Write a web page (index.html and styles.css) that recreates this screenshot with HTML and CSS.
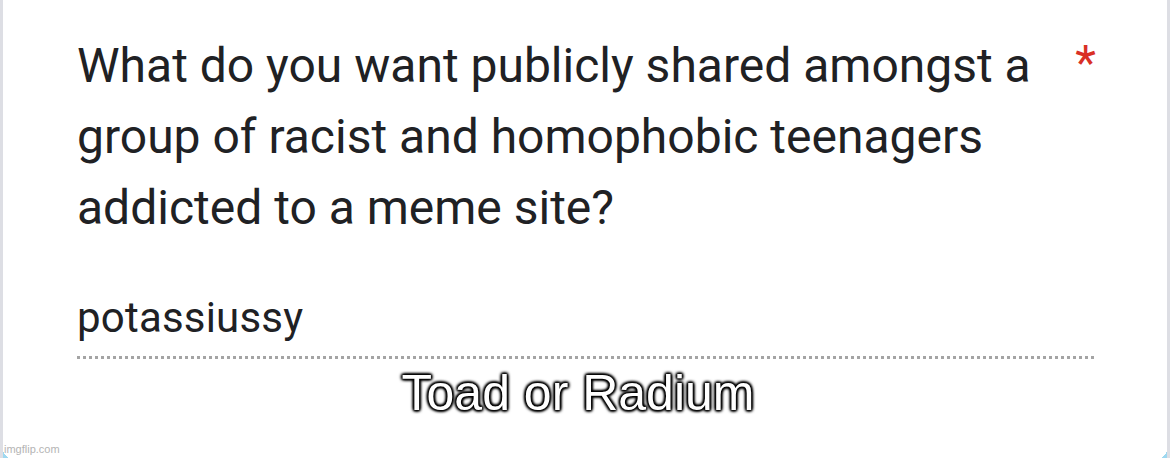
FILE: index.html
```html
<!DOCTYPE html>
<html>
<head>
<meta charset="utf-8">
<link rel="stylesheet" href="styles.css">
</head>
<body>
<div class="frame">
  <div class="card">
    <div class="question">
      <div class="question-text">What do you want publicly shared amongst a group of racist and homophobic teenagers addicted to a meme site?</div>
      <div class="required">*</div>
    </div>
    <div class="answer">potassiussy</div>
    <div class="dots"></div>
  </div>
  <div class="caption">Toad or Radium</div>
  <div class="watermark">imgflip.com</div>
  <div class="corner corner-left"></div>
  <div class="corner corner-right"></div>
</div>
</body>
</html>
```

FILE: styles.css
```css
html, body {
  margin: 0;
  padding: 0;
  background: #ffffff;
}

.frame {
  position: relative;
  width: 1170px;
  height: 458px;
  box-sizing: border-box;
  border-left: 3px solid #dddee4;
  border-right: 3px solid #dddee4;
  background: #ffffff;
  overflow: hidden;
}

.card {
  padding: 30px 0 0 74px;
  width: 1022px;
}

.question {
  display: flex;
  align-items: flex-start;
  justify-content: space-between;
}

.question-text {
  width: 970px;
  font-family: Roboto, "Noto Sans", sans-serif;
  font-size: 48px;
  line-height: 71px;
  color: #202124;
}

.required {
  font-family: Roboto, "Noto Sans", sans-serif;
  font-size: 48px;
  line-height: 66px;
  color: #d93025;
  margin-right: 3px;
}

.answer {
  margin-top: 49px;
  font-family: Roboto, "Noto Sans", sans-serif;
  font-size: 42px;
  letter-spacing: 0.2px;
  line-height: 52px;
  color: #202124;
}

.dots {
  margin-top: 12px;
  height: 3px;
  width: 1018px;
  background-image: repeating-linear-gradient(to right, #a4a4a4 0, #a4a4a4 3px, transparent 3px, transparent 6px);
}

.caption {
  position: absolute;
  left: 0;
  right: 0;
  top: 363px;
  text-align: center;
  padding-right: 14px;
  font-family: "Liberation Sans", Arial, sans-serif;
  font-size: 50px;
  line-height: 60px;
  color: #ffffff;
  text-shadow: 0 0 4px #000, 0 0 3px #000, 0 0 2px #000, 1px 1px 3px #000, -1px -1px 3px #000, 1px -1px 3px #000, -1px 1px 3px #000;
}

.watermark {
  position: absolute;
  left: 1px;
  bottom: 2px;
  font-family: "Liberation Sans", Arial, sans-serif;
  font-size: 11px;
  line-height: 14px;
  color: #b4b4b4;
}

.corner {
  position: absolute;
  bottom: 0;
  width: 8px;
  height: 10px;
}

.corner-left {
  left: -3px;
  background: linear-gradient(to top right, #9ed8f0 50%, transparent 50%);
}

.corner-right {
  right: -3px;
  background: linear-gradient(to top left, #9ed8f0 50%, transparent 50%);
}
```
